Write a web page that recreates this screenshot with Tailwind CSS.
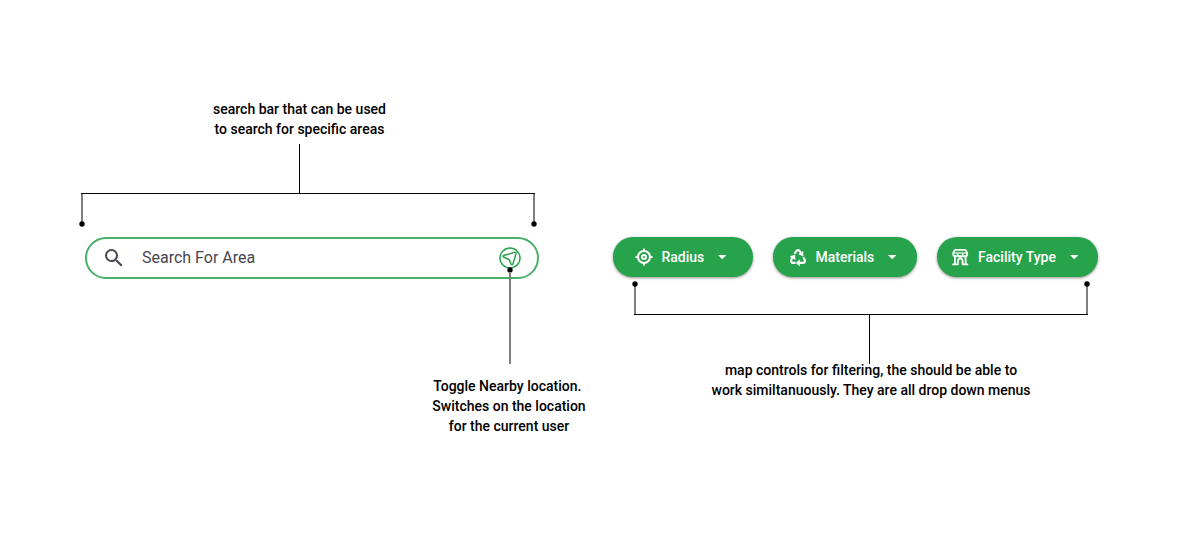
<!DOCTYPE html>
<html lang="en">
<head>
<meta charset="utf-8">
<meta name="viewport" content="width=device-width, initial-scale=1">
<title>Map search and filter controls</title>
<script src="https://cdn.jsdelivr.net/npm/@tailwindcss/browser@4"></script>
</head>
<body class="min-h-screen bg-white font-['Roboto',sans-serif] text-sm font-medium text-black">
<main class="grid grid-cols-[458fr_485fr] items-start gap-[74px] pt-[99px] pr-[82px] pb-24 pl-[81px]">

  <!-- Search bar and its notes -->
  <section class="flex flex-col">
    <div class="flex flex-col items-center pr-[21px]">
      <p class="text-center leading-5">search bar that can be used<br>to search for specific areas</p>
      <div class="mt-[5px] h-[49px] w-px bg-black"></div>
    </div>
    <div class="relative mr-1 h-8 border-t border-black">
      <div class="absolute top-0 left-0 h-[30px] w-[2px] bg-[#7f7f7f]"></div>
      <div class="absolute top-0 right-0 h-[30px] w-[2px] bg-[#7f7f7f]"></div>
      <svg class="absolute top-[27px] -left-[2px] size-[6px]" viewBox="0 0 6 6"><circle cx="3" cy="3" r="2.67"/></svg>
      <svg class="absolute top-[27px] -right-[2px] size-[6px]" viewBox="0 0 6 6"><circle cx="3" cy="3" r="2.67"/></svg>
    </div>
    <form class="mt-3 ml-1 flex h-[42px] items-center rounded-full border-2 border-[#48b169] pr-4 pl-[15px]" role="search">
      <label for="area" class="flex" aria-label="Search for area">
        <svg class="size-6 fill-[#49454f]" viewBox="0 0 24 24"><path d="M15.5 14h-.79l-.28-.27A6.471 6.471 0 0 0 16 9.500 6.500 6.500 0 1 0 9.500 16c1.610 0 3.090-.59 4.230-1.570l.27.28v.79l5 4.990L20.490 19l-4.990-5zm-6 0C7.010 14 5 11.990 5 9.500S7.010 5 9.500 5 14 7.010 14 9.500 11.990 14 9.500 14z"/></svg>
      </label>
      <input id="area" type="text" placeholder="Search For Area" class="ml-4 min-w-0 flex-1 bg-transparent text-base font-normal text-[#49454f] outline-none placeholder:text-[#49454f]">
      <button type="button" aria-label="Toggle nearby location" class="flex">
        <svg class="size-[22px] fill-none stroke-[#26a34b]" viewBox="0 0 22 22" stroke-width="1.500" stroke-linejoin="round"><circle cx="11" cy="11" r="10"/><path d="M4.700 8.500 15.700 5.400c1-.3 1.600.2 1.400 1.200L13.900 16.900c-.3 1-1.500 1.100-1.900.1l-1.500-3.800c-.2-.5-.5-.8-1-1l-4.600-1.900c-1-.4-1-1.500-.2-1.800Z"/></svg>
      </button>
    </form>
    <div class="pointer-events-none relative -mt-3 -mr-[50px] flex w-[158px] flex-col items-center self-end">
      <svg class="size-[6px]" viewBox="0 0 6 6"><circle cx="3" cy="3" r="2.67"/></svg>
      <div class="-mt-px h-[92px] w-[2px] bg-[#7f7f7f]"></div>
      <p class="mt-3 pr-[2px] text-center leading-5 whitespace-nowrap">Toggle Nearby location.&nbsp;<br>Switches on the location<br>for the current user</p>
    </div>
  </section>

  <!-- Filter menus and their note -->
  <section class="flex flex-col pt-[138px]">
    <div class="grid grid-cols-[140fr_144fr_161fr] gap-5 text-white">
      <label class="flex h-10 items-center justify-center gap-2 rounded-full bg-[#26a34b] shadow-[0_1px_3px_rgba(0,0,0,0.45)]">
        <svg class="size-5 fill-none stroke-white" viewBox="0 0 20 20" stroke-width="2"><circle cx="10" cy="10" r="6"/><circle cx="10" cy="10" r="2"/><path d="M10 1.500v3M10 15.500v3M1.500 10h3M15.500 10h3"/></svg>
        <select aria-label="Radius" class="appearance-none bg-transparent outline-none"><option>Radius</option></select>
        <svg class="pointer-events-none size-5 fill-white" viewBox="0 0 20 20"><path d="m5 8 4.200 4.200L13.400 8z"/></svg>
      </label>
      <label class="flex h-10 items-center justify-center gap-2 rounded-full bg-[#26a34b] shadow-[0_1px_3px_rgba(0,0,0,0.45)]">
        <svg class="size-5" viewBox="0 0 20 20"><g fill="none" stroke="#fff" stroke-width="2.100" stroke-linecap="butt" stroke-linejoin="round"><path d="M6.500 7 8.100 4.200c.8-1.500 3-1.500 3.800 0l1.300 2.200"/><path d="m15.300 10.200 1.400 2.500c.8 1.500-.2 3.200-1.800 3.200H11.300"/><path d="M7.600 15.900H5.100c-1.600 0-2.600-1.700-1.800-3.200l1.500-2.500"/></g><path fill="#fff" stroke="#fff" stroke-width=".6" stroke-linejoin="round" d="m14.900 4.600.2 4.500-4.400-2zM11.600 12.900v6L8.200 15.900zM2.200 9.600l4.500-1.500.5 4.500z"/></svg>
        <select aria-label="Materials" class="appearance-none bg-transparent outline-none"><option>Materials</option></select>
        <svg class="pointer-events-none size-5 fill-white" viewBox="0 0 20 20"><path d="m5 8 4.200 4.200L13.400 8z"/></svg>
      </label>
      <label class="flex h-10 items-center justify-center gap-2 rounded-full bg-[#26a34b] shadow-[0_1px_3px_rgba(0,0,0,0.45)]">
        <svg class="size-5 fill-none stroke-white" viewBox="0 0 20 20" stroke-width="1.800" stroke-linejoin="round"><path d="M5 2.900h10.500l1.700 3v1.300a2 2 0 0 1-2 2H5.200a2 2 0 0 1-2-2V5.900z"/><path d="M3.500 6h13.500" stroke-width="1.200"/><path d="M7.700 6.200v1.500a2 2 0 0 1-4 0M12.700 6.200v1.500a2 2 0 0 1-5 0M17 7.700a2 2 0 0 1-4.200 0" stroke-width="1.200"/><path d="M4.900 9v8M15.600 9v8M2.300 17.300h5.600v-3.400a2.350 2.350 0 0 1 4.700 0v3.400h5.600"/></svg>
        <select aria-label="Facility Type" class="appearance-none bg-transparent outline-none"><option>Facility Type</option></select>
        <svg class="pointer-events-none size-5 fill-white" viewBox="0 0 20 20"><path d="m5 8 4.200 4.200L13.400 8z"/></svg>
      </label>
    </div>
    <div class="relative mt-1 mr-[10px] ml-[21px] h-[34px] border-b border-black">
      <div class="absolute bottom-0 left-0 h-[30px] w-[2px] bg-[#7f7f7f]"></div>
      <div class="absolute right-0 bottom-0 h-[30px] w-[2px] bg-[#7f7f7f]"></div>
      <svg class="absolute top-0 -left-[2px] size-[6px]" viewBox="0 0 6 6"><circle cx="3" cy="3" r="2.67"/></svg>
      <svg class="absolute top-0 -right-[2px] size-[6px]" viewBox="0 0 6 6"><circle cx="3" cy="3" r="2.67"/></svg>
    </div>
    <div class="flex flex-col items-center pl-[28px]">
      <div class="h-[49px] w-px bg-black"></div>
      <p class="-mt-1 pl-[3px] text-center leading-5">map controls for filtering, the should be able to<br>work similtanuously. They are all drop down menus</p>
    </div>
  </section>

</main>
</body>
</html>
